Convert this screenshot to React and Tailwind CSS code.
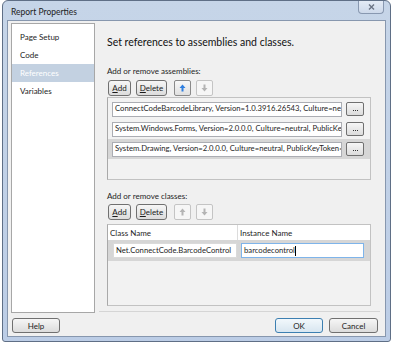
import React from 'react'

const font = "font-['Lato','Open_Sans',sans-serif]"

function Btn({ children, w, active }) {
  return (
    <div
      className={`h-[16px] ${w} flex items-center justify-center rounded-[3px] border text-[8px] ${
        active ? 'border-[#707070] bg-gradient-to-b from-[#f6f6f6] to-[#dcdcdc] text-[#1a1a1a]' : 'border-[#b9b9b9] bg-[#f4f4f4] text-[#9a9a9a]'
      }`}
    >
      {children}
    </div>
  )
}

function Arrow({ up, color }) {
  return (
    <svg width="7" height="8" viewBox="0 0 7 8">
      {up ? (
        <path d="M3.5 0.5 L6.5 4 L4.5 4 L4.5 7.5 L2.5 7.5 L2.5 4 L0.5 4 Z" fill={color} />
      ) : (
        <path d="M3.5 7.5 L6.5 4 L4.5 4 L4.5 0.5 L2.5 0.5 L2.5 4 L0.5 4 Z" fill={color} />
      )}
    </svg>
  )
}

function Toolbar({ upActive }) {
  return (
    <div className="flex items-center gap-[5px] ml-[1px]">
      <Btn w="w-[23px]" active><span><u>A</u>dd</span></Btn>
      <Btn w="w-[31px]" active><span><u>D</u>elete</span></Btn>
      <div className="ml-[2px] flex gap-[5px]">
        <div className={`w-[17px] h-[16px] rounded-[2px] border flex items-center justify-center ${upActive ? 'border-[#8a8a8a] bg-gradient-to-b from-[#f8f8f8] to-[#e0e0e0]' : 'border-[#c4c4c4] bg-[#f6f6f6]'}`}>
          <Arrow up color={upActive ? '#2f7fe0' : '#b4b4b4'} />
        </div>
        <div className="w-[17px] h-[16px] rounded-[2px] border border-[#c4c4c4] bg-[#f6f6f6] flex items-center justify-center">
          <Arrow color="#b4b4b4" />
        </div>
      </div>
    </div>
  )
}

function Dots() {
  return (
    <div className="ml-[4px] w-[18px] h-[14px] rounded-[2px] border border-[#707070] bg-gradient-to-b from-[#f6f6f6] to-[#dcdcdc] flex items-end justify-center gap-[1px] pb-[4px]">
      <span className="w-px h-px bg-[#333]" />
      <span className="w-px h-px bg-[#333]" />
      <span className="w-px h-px bg-[#333]" />
    </div>
  )
}

const assemblies = [
  'ConnectCodeBarcodeLibrary, Version=1.0.3916.26543, Culture=neutral, PublicKeyToken=null',
  'System.Windows.Forms, Version=2.0.0.0, Culture=neutral, PublicKeyToken=b77a5c561934e089',
  'System.Drawing, Version=2.0.0.0, Culture=neutral, PublicKeyToken=b03f5f7f11d50a3a',
]

export default function App() {
  return (
    <div className={`w-[393px] h-[346px] bg-white ${font} text-[#1e1e1e]`}>
      <div className="ml-[2px] w-[389px] h-[342px] rounded-t-[6px] rounded-b-[3px] border border-[#5f6f86] bg-gradient-to-b from-[#c6d5e8] to-[#bccde6] flex flex-col px-[4px] pb-[4px]">
        <div className="h-[19px] flex items-start justify-between">
          <span className="pl-[4px] pt-[5px] text-[8.5px] leading-[12px] text-[#222]">Report Properties</span>
          <div className="mr-[2px] w-[26px] h-[13px] rounded-b-[4px] border border-t-0 border-[#8898b0] bg-gradient-to-b from-[#e3ebf5] to-[#cdd9ea] flex items-center justify-center">
            <svg width="7" height="6" viewBox="0 0 7 6">
              <path d="M1 0.5 L6 5.5 M6 0.5 L1 5.5" stroke="#6a7384" strokeWidth="1.4" />
            </svg>
          </div>
        </div>
        <div className="flex-1 bg-[#f0f0f0] border border-[#8797ae] flex flex-col">
          <div className="flex h-[292px] pt-[2px]">
            <div className="ml-[3px] w-[84px] h-[290px] bg-white border border-[#a7a7a7] flex flex-col pt-[4px] text-[8px]">
              <div className="h-[18px] flex items-center pl-[8px]">Page Setup</div>
              <div className="h-[18px] flex items-center pl-[8px]">Code</div>
              <div className="h-[18px] flex items-center pl-[8px] bg-[#c3d1e1] text-white">References</div>
              <div className="h-[18px] flex items-center pl-[8px]">Variables</div>
            </div>
            <div className="ml-[4px] w-[282px] flex flex-col">
              <div className="flex-1 pl-[8px] flex flex-col">
                <div className="mt-[12px] h-[16px] flex items-center text-[10.5px] text-[#111]">Set references to assemblies and classes.</div>
                <div className="mt-[14px] h-[12px] flex items-center text-[8px]">Add or remove assemblies:</div>
                <div className="mt-[3px]"><Toolbar upActive /></div>
                <div className="mt-[1px] w-[264px] h-[83px] border border-[#c2c2c2] border-l-[#a9a9a9] bg-[#f2f2f2] flex flex-col pt-[1px] overflow-hidden">
                  {assemblies.map((a, i) => (
                    <div key={i} className={`h-[20px] flex items-center pl-[4px] ${i === 2 ? 'bg-[#d6d6d6]' : ''}`}>
                      <div className="w-[230px] h-[15px] bg-white border border-[#abadb3] flex items-center pl-[2px] text-[7.7px] whitespace-nowrap overflow-hidden">{a}</div>
                      <Dots />
                    </div>
                  ))}
                </div>
                <div className="mt-[10px] h-[12px] flex items-center text-[8px]">Add or remove classes:</div>
                <div className="mt-[2px]"><Toolbar /></div>
                <div className="mt-[4px] w-[264px] h-[82px] border border-[#c2c2c2] border-l-[#a9a9a9] bg-[#f2f2f2] flex flex-col">
                  <div className="h-[15px] bg-white flex text-[8px]">
                    <div className="w-[130px] border-r border-[#dcdcdc] flex items-center pl-[2px]">Class Name</div>
                    <div className="flex items-center pl-[2px]">Instance Name</div>
                  </div>
                  <div className="h-[21px] bg-[#d6d6d6] flex items-center pl-[5px] text-[7.7px]">
                    <div className="w-[124px] h-[15px] bg-white border border-[#dadada] flex items-center pl-[2px] whitespace-nowrap">Net.ConnectCode.BarcodeControl</div>
                    <div className="ml-[4px] w-[123px] h-[15px] bg-white border border-[#7eb4ea] flex items-center pl-[2px]">
                      barcodecontrol<span className="w-px h-[10px] bg-black" />
                    </div>
                  </div>
                </div>
              </div>
              <div className="h-px bg-[#d5d5d5] mr-[1px] mb-[1px]" />
            </div>
          </div>
          <div className="flex items-center px-[4px] pt-[5px] text-[8px]">
            <div className="w-[48px] h-[15px] rounded-[3px] border border-[#707070] bg-gradient-to-b from-[#f6f6f6] to-[#dcdcdc] flex items-center justify-center">Help</div>
            <div className="ml-auto w-[48px] h-[15px] rounded-[3px] border border-[#3c7fb1] bg-gradient-to-b from-[#f2f8fc] to-[#d8e6f0] flex items-center justify-center">OK</div>
            <div className="ml-[6px] mr-[3px] w-[49px] h-[15px] rounded-[3px] border border-[#707070] bg-gradient-to-b from-[#f6f6f6] to-[#dcdcdc] flex items-center justify-center">Cancel</div>
          </div>
        </div>
      </div>
    </div>
  )
}
